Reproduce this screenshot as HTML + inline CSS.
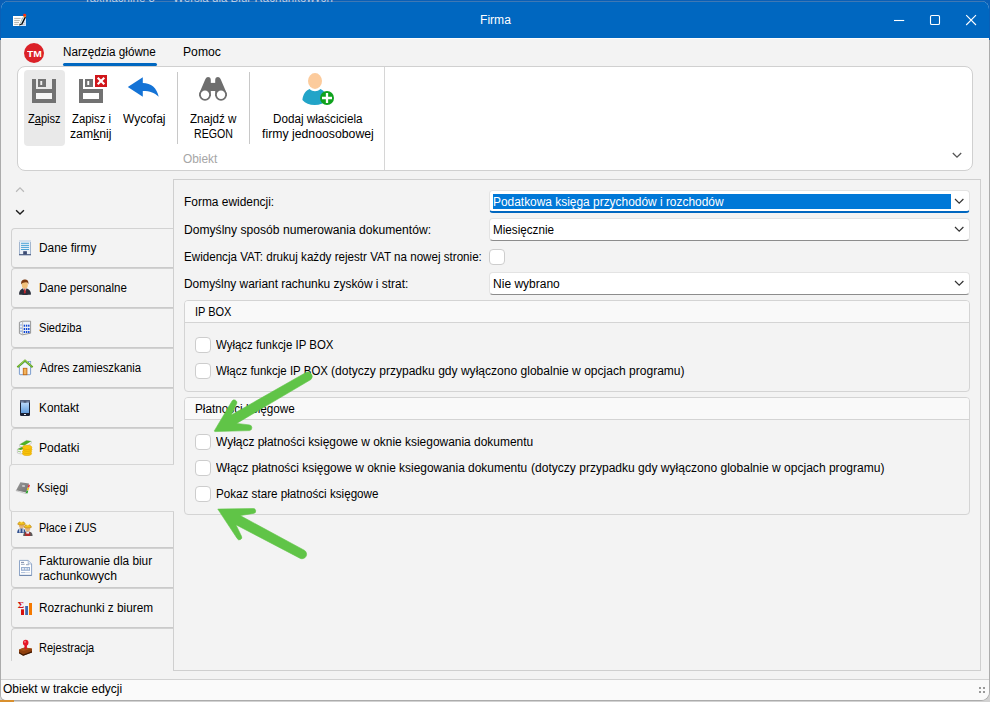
<!DOCTYPE html>
<html lang="pl">
<head>
<meta charset="utf-8">
<title>Firma</title>
<style>
*{box-sizing:border-box;margin:0;padding:0}
html,body{width:990px;height:702px;overflow:hidden}
body{position:relative;background:#f3f3f3;font-family:"Liberation Sans",sans-serif;font-size:12px;line-height:16px;color:#000}
.a{position:absolute}
.t{position:absolute;white-space:nowrap;line-height:16px;transform-origin:0 0}
.t u{text-decoration:underline;text-underline-offset:1px}
svg{position:absolute;overflow:visible}
.tab{position:absolute;left:11px;width:162px;height:40px;border:1px solid #d2d2d2;border-right:none;border-bottom-color:#cacaca;border-radius:4px 0 0 4px;background:#f3f3f3}
.cb{position:absolute;width:16px;height:16px;border:1px solid #cdcdcd;border-radius:4px;background:#fff}
.combo{position:absolute;left:489px;width:481px;height:23px;border:1px solid #e3e3e3;border-bottom:1px solid #8c8c8c;border-radius:4px;background:#fff}
.grp{position:absolute;left:184px;width:786px;border:1px solid #d4d4d4;border-radius:4px;background:#f3f3f3}
.grp .hd{position:absolute;left:0;top:0;right:0;height:22px;background:#f9f9f9;border-bottom:1px solid #d4d4d4;border-radius:3px 3px 0 0}

</style>
</head>
<body>
<!-- desktop fringe behind window -->
<div class="a" style="left:0;top:0;width:990px;height:40px;background:#0a5fb6"></div>
<div class="a" style="left:0;top:40px;width:990px;height:662px;background:#d2d2d2"></div>
<div class="a" style="left:0;top:40px;width:990px;height:661px;background:#acacac;border-radius:0 0 9px 6px"></div>
<div class="a" style="left:0;top:700px;width:14px;height:2px;background:#d9902e"></div>
<!-- window -->
<div class="a" style="left:1px;top:1px;width:988px;height:699px;background:#f3f3f3;border-radius:8px 8px 8px 5px;overflow:hidden">
  <div class="a" style="left:0;top:0;width:988px;height:37px;background:#0067c0;border-top:1px solid #3f78b4"></div>
  <div class="a" style="left:0;top:37px;width:988px;height:1px;background:#fdfdfd"></div>
  <div class="a" style="left:0;top:678px;width:988px;height:1px;background:#d2d2d2"></div>
  <div class="a" style="left:0;top:679px;width:988px;height:20px;background:#fafafa"></div>
</div>
<!-- title bar icon -->
<svg style="left:0;top:0" width="40" height="40" viewBox="0 0 40 40">
  <rect x="13" y="16" width="13" height="10" fill="#fff"/>
  <rect x="21" y="18" width="5" height="8" fill="#d3e6ff"/>
  <path d="M14.2 18.4h6.4M14.2 20.4h5.6M14.2 22.4h4.8M14.2 24.4h4.2" stroke="#a9a9a2" stroke-width="0.9"/>
  <path d="M22.6 22.4h2.6M22 24.4h3.2" stroke="#c8c0b4" stroke-width="0.7"/>
  <path d="M19.5 25.3 L23.9 16.4" stroke="#a08a58" stroke-width="1.1"/>
  <path d="M20.5 24.4 L24.7 16.3" stroke="#d4f0ff" stroke-width="1.5"/>
  <path d="M21.5 24.6 L25.7 16.4" stroke="#050505" stroke-width="1.3"/>
  <path d="M19.3 25.8 L20 23.8 L21.8 24.6 Z" fill="#111"/>
  <path d="M23.2 16.6 L24.4 14.4 L26.4 15.4 L25.6 17.4 Z" fill="#f07a1c"/>
  <ellipse cx="24.6" cy="14.9" rx="1.5" ry="1.1" fill="#ff2a0c"/>
</svg>
<!-- window buttons -->
<svg style="left:890px;top:10px" width="92" height="20" viewBox="890 10 92 20" fill="none" stroke="#fff" stroke-width="1.1">
  <path d="M894 20.5h10.2"/>
  <rect x="930.5" y="15.5" width="9" height="9" rx="1.3"/>
  <path d="M966.2 15.2l9.8 9.8M976 15.2l-9.8 9.8"/>
</svg>
<!-- TM logo -->
<div class="a" style="left:24px;top:43px;width:20px;height:20px;border-radius:50%;background:#db2128"></div>
<!-- active tab underline -->
<div class="a" style="left:63px;top:63px;width:94px;height:3px;border-radius:1.5px;background:#0067c0"></div>
<!-- ribbon panel -->
<div class="a" style="left:17px;top:66px;width:956px;height:105px;background:#fff;border:1px solid #d0d0d0;border-radius:8px"></div>
<div class="a" style="left:384px;top:67px;width:1px;height:103px;background:#d6d6d6"></div>
<div class="a" style="left:24px;top:70px;width:41px;height:76px;border-radius:4px;background:#e9e9e9"></div>
<div class="a" style="left:177px;top:72px;width:1px;height:72px;background:#c8c8c8"></div>
<div class="a" style="left:249px;top:72px;width:1px;height:72px;background:#c8c8c8"></div>
<!-- ribbon icons -->
<svg style="left:0;top:0" width="990" height="702" viewBox="0 0 990 702">
  <!-- save -->
  <rect x="36" y="93" width="16" height="6" fill="#f6f6f6"/><rect x="40" y="81" width="2.4" height="4" fill="#f0f0f0"/>
  <g fill="#727272">
    <path d="M32 79h4v10h16v-10h4v24h-24z M36 93v6h16v-6z" fill-rule="evenodd"/>
    <path d="M38 79h8v8h-8z M40.3 81v4h1.9v-4z" fill-rule="evenodd"/>
  </g>
  <!-- save and close -->
  <g fill="#727272">
    <path d="M79 79h4v10h20v14h-24z M83 93v6h16v-6z" fill-rule="evenodd"/>
    <path d="M85 79h8v8h-8z M87.3 81v4h1.9v-4z" fill-rule="evenodd"/>
  </g>
  <rect x="95" y="75" width="12" height="12" fill="#d0161b"/>
  <path d="M97.7 77.7l6.6 6.6M104.3 77.7l-6.6 6.6" stroke="#fff" stroke-width="2.1"/>
  <!-- undo -->
  <path d="M127.8 87 L142.8 77.2 L142.8 83 C151 83 157 88 158.7 96.8 C155 92.6 150 91 142.8 90.9 L142.8 96.8 Z" fill="#1473d6"/>
  <!-- binoculars -->
  <g fill="#6e6e6e">
    <path d="M205.2 79.6 Q205.9 76.9 207.9 76.9 Q210.8 76.9 210.8 80 V96 H199.2 V93.4 Z"/>
    <path d="M220.8 79.6 Q220.1 76.9 218.1 76.9 Q215.2 76.9 215.2 80 V96 H226.8 V93.4 Z"/>
    <rect x="209" y="82.9" width="8" height="8.1"/>
    <circle cx="205" cy="94.8" r="5.9"/>
    <circle cx="221" cy="94.8" r="5.9"/>
  </g>
  <circle cx="205" cy="94.8" r="4.2" fill="#fff"/>
  <circle cx="221" cy="94.8" r="4.2" fill="#fff"/>
  <!-- person add -->
  <path d="M302.4 100 C303 94 306 90.5 309.5 89 C313 92 317 92 320.5 89 C324 90.5 326.5 94 327 100 C324 103.5 320 105 314.7 105 C309.4 105 305.4 103.5 302.4 100 Z" fill="#22a4c8"/>
  <ellipse cx="315" cy="81" rx="7" ry="7.9" fill="#fccb9c"/>
  <circle cx="327" cy="98" r="7" fill="#0fa21d"/>
  <path d="M322 98h10M327 93v10" stroke="#fff" stroke-width="2.3"/>
  <!-- ribbon collapse chevron -->
  <path d="M952.8 153l4.2 4.2 4.2-4.2" fill="none" stroke="#555" stroke-width="1.3"/>
  <!-- nav chevrons -->
  <path d="M16.1 191.7L20 187.9L23.9 191.7" fill="none" stroke="#b9b9b9" stroke-width="1.2"/>
  <path d="M16.1 210.2L20 214L23.9 210.2" fill="none" stroke="#1c1c1c" stroke-width="1.4"/>
</svg>
<!-- content panel -->
<div class="a" style="left:173px;top:179px;width:808px;height:492px;border:1px solid #cfcfcf;background:#f3f3f3"></div>
<!-- nav tabs -->
<div class="tab" style="top:228px"></div>
<div class="tab" style="top:268px"></div>
<div class="tab" style="top:308px"></div>
<div class="tab" style="top:348px"></div>
<div class="tab" style="top:388px"></div>
<div class="tab" style="top:428px"></div>
<div class="tab" style="top:508px"></div>
<div class="tab" style="top:548px"></div>
<div class="tab" style="top:588px"></div>
<div class="tab" style="top:628px;height:33px;border-bottom:none;border-radius:4px 0 0 0"></div>
<div class="a" style="left:9px;top:464px;width:165px;height:48px;border:1px solid #d6d6d6;border-right:none;border-radius:4px 0 0 4px;background:#f3f3f3"></div>
<!-- form controls -->
<div class="combo" style="top:190px;border-bottom:2px solid #0067c0"></div>
<div class="a" style="left:493px;top:194px;width:458px;height:15px;background:#0078d7"></div>
<div class="combo" style="top:218px"></div>
<div class="cb" style="left:489px;top:249px"></div>
<div class="combo" style="top:272px"></div>
<svg style="left:0;top:0" width="990" height="702" viewBox="0 0 990 702" fill="none" stroke="#333" stroke-width="1.2">
  <path d="M955 199l4.2 4.2 4.2-4.2"/>
  <path d="M955 227l4.2 4.2 4.2-4.2"/>
  <path d="M955 281l4.2 4.2 4.2-4.2"/>
</svg>
<div class="grp" style="top:300px;height:92px"><div class="hd"></div></div>
<div class="cb" style="left:195px;top:337px"></div>
<div class="cb" style="left:195px;top:363px"></div>
<div class="grp" style="top:397px;height:118px"><div class="hd"></div></div>
<div class="cb" style="left:195px;top:434px"></div>
<div class="cb" style="left:195px;top:460px"></div>
<div class="cb" style="left:195px;top:486px"></div>
<!-- status grip -->
<svg style="left:978px;top:686px" width="8" height="8" viewBox="0 0 8 8" fill="#9a9a9a">
  <rect x="1" y="1" width="2" height="2"/><rect x="5" y="1" width="2" height="2"/>
  <rect x="1" y="5" width="2" height="2"/><rect x="5" y="5" width="2" height="2"/>
</svg>

<svg style="left:0;top:0" width="990" height="702" viewBox="0 0 990 702">
  <defs>
    <linearGradient id="gscr" x1="0" y1="0" x2="0" y2="1"><stop offset="0" stop-color="#b8d7fa"/><stop offset="1" stop-color="#639ddc"/></linearGradient>
    <linearGradient id="gbook" x1="0" y1="0" x2="1" y2="1"><stop offset="0" stop-color="#9a9a9a"/><stop offset="1" stop-color="#6f6f6f"/></linearGradient>
  </defs>
  <!-- Dane firmy: building -->
  <g>
    <rect x="19.5" y="240.5" width="11" height="14.3" fill="#eaf0f7" stroke="#a3b6cf" stroke-width="1"/>
    <rect x="19" y="240" width="12" height="2" fill="#d6e0ec"/>
    <path d="M21 243.3h8M21 245.4h8M21 247.4h8M21 249.5h8" stroke="#4aa3d6" stroke-width="1"/>
    <rect x="23.2" y="251.2" width="3.7" height="3.5" fill="#3b4a72"/>
    <rect x="19" y="254.2" width="12" height="1" fill="#47577e"/>
  </g>
  <!-- Dane personalne: person -->
  <g>
    <path d="M19 294.6 C19 291 20.5 289.3 23 288.2 L26.6 288.2 C29.3 289.3 31 291 31 294.6 C29 295.2 21 295.2 19 294.6Z" fill="#2b2f3b"/>
    <path d="M23 288.3L24.8 292 26.7 288.3Z" fill="#fff"/>
    <path d="M24.3 288.6h1.1l.5 4.2-1 1-1.1-1z" fill="#c0262c"/>
    <ellipse cx="24.8" cy="284.9" rx="3" ry="3.6" fill="#f1c07a"/>
    <path d="M21.2 284.5 C20.8 280.3 23 279.6 24.8 279.6 C27 279.6 28.9 280.6 28.4 284.6 C28 282.8 27 282 25.8 282.3 C24 282.6 22.4 282.6 21.2 284.5Z" fill="#7a3a12"/>
  </g>
  <!-- Siedziba: office -->
  <g>
    <path d="M19.4 322.3 L22.6 321.2 H30.6 V333.2 L22.6 334.8 L19.4 333.4Z" fill="#eef2f8" stroke="#8c8c8c" stroke-width="0.9"/>
    <path d="M22.6 321.2V334.8" stroke="#a8a8a8" stroke-width="0.7"/>
    <g fill="#0f45d2"><rect x="23.7" y="324.7" width="1.4" height="2"/><rect x="25.9" y="324.7" width="1.4" height="2"/><rect x="28.1" y="324.7" width="1.4" height="2"/>
    <rect x="23.7" y="328" width="1.4" height="2"/><rect x="25.9" y="328" width="1.4" height="2"/><rect x="28.1" y="328" width="1.4" height="2"/>
    <rect x="23.7" y="331" width="1.4" height="2"/><rect x="25.9" y="331" width="1.4" height="2"/><rect x="28.1" y="331" width="1.4" height="2"/></g>
    <path d="M20.2 325h1.7M20.2 328.2h1.7M20.2 331.2h1.7" stroke="#7fa0e0" stroke-width="1.2"/>
  </g>
  <!-- Adres zamieszkania: house -->
  <g>
    <rect x="28.4" y="361.4" width="2.3" height="5" fill="#eaf0fa" stroke="#7c9fd0" stroke-width="0.8"/>
    <path d="M19.4 366.5 L25 361.6 L30.6 366.5 V374 Q30.6 374.7 29.9 374.7 H20.1 Q19.4 374.7 19.4 374Z" fill="#f1f5fc" stroke="#6f94c8" stroke-width="0.9"/>
    <rect x="23.3" y="368.3" width="3.6" height="6.4" fill="#f2b35c" stroke="#c36a12" stroke-width="0.9"/>
    <path d="M17.4 367.3 L25 360.6 L32.6 367.3" fill="none" stroke="#5fa51c" stroke-width="2" stroke-linejoin="miter"/>
    <path d="M18.4 366.2 L25 360.3 L31.6 366.2" fill="none" stroke="#b4e07a" stroke-width="0.6"/>
  </g>
  <!-- Kontakt: phone -->
  <g>
    <rect x="20" y="400" width="10" height="16" rx="1.3" fill="#1a2135"/>
    <rect x="20.3" y="400.3" width="9.4" height="2.6" rx="1" fill="#6c7a99"/>
    <rect x="21" y="402.6" width="8" height="10.4" fill="url(#gscr)"/>
    <path d="M23.6 402h2.8" stroke="#222b40" stroke-width="0.8"/>
    <rect x="24" y="414" width="2" height="1" fill="#e8edf5"/>
  </g>
  <!-- Podatki: books and coins -->
  <g>
    <path d="M19.6 444.6 L26.4 440.4 L31.3 441.3 L31.3 443.4 L24.4 447.6 L19.6 446.4Z" fill="#f6f6f6" stroke="#b5b5b5" stroke-width="0.6"/>
    <path d="M19.6 444.6 L26.4 440.4 L31.3 441.3 L24.4 445.6Z" fill="#4db029"/>
    <path d="M17.4 449.2 L22 446.9 L25.5 447.6 L25.5 452 L21 454 L17.4 453Z" fill="#f6f6f6" stroke="#b5b5b5" stroke-width="0.6"/>
    <path d="M17.4 449.2 L22 446.9 L25.5 447.6 L21 450Z" fill="#4aa826"/>
    <path d="M18 451.2l3 .9" stroke="#5ab030" stroke-width="0.6"/>
    <g fill="#f8c40c" stroke="#e2a500" stroke-width="0.6">
      <ellipse cx="27" cy="453.6" rx="4.6" ry="2"/>
      <ellipse cx="27" cy="451.6" rx="4.6" ry="2"/>
      <ellipse cx="27.4" cy="449.4" rx="4.6" ry="2"/>
      <ellipse cx="27.2" cy="447.4" rx="4.6" ry="2.1"/>
    </g>
  </g>
  <!-- Ksiegi: book -->
  <g>
    <path d="M16 490.7 L26 493.6 L27 492.3 L17 489.6Z" fill="#fafafa" stroke="#9a9a9a" stroke-width="0.5"/>
    <path d="M16.2 490.2 L20.4 482.2 L29 483.5 L26.2 492.6Z" fill="url(#gbook)"/>
    <path d="M22.4 485.2l2.6.4-.3 1.2-2.6-.4z" fill="#e6e6e6"/>
    <path d="M28.6 484.6l1.3.5-.8 2.6-1.3-.4z" fill="#e8222a"/>
    <path d="M27.7 487.6l1.4.4-.8 2.5-1.4-.4z" fill="#f5c400"/>
    <path d="M26.8 490.4l1.5.4-.9 2.6-1.6-.5z" fill="#22a422"/>
  </g>
  <!-- Place i ZUS: workers -->
  <g>
    <path d="M17.2 533 C17.2 530 18.5 528.4 21.5 528.2 C24.5 528.4 25.6 530 25.6 533Z" fill="#30508f"/>
    <path d="M19.3 529h1.2v3.6h-1.2zM22.5 529h1.2v3.6h-1.2z" fill="#e8eef8"/>
    <ellipse cx="21.5" cy="525.6" rx="2.6" ry="2.8" fill="#e6b678"/>
    <path d="M17.8 524.3 C18 520.6 25 520.6 25.2 524.3 C23 525.2 20 525.2 17.8 524.3Z" fill="#f2c21a" stroke="#b47a14" stroke-width="0.6"/>
    <ellipse cx="21.5" cy="521.6" rx="1.6" ry="0.8" fill="#fff3c4"/>
    <path d="M23.2 536 C23.2 533 24.5 531.4 27.7 531.2 C31 531.4 32.6 533 32.6 536Z" fill="#5a5a5a"/>
    <path d="M25.2 536 V532.4 h5 V536Z" fill="#b12a2a"/>
    <path d="M26.3 531.6h2.8v2h-2.8z" fill="#e8eef8"/>
    <ellipse cx="27.7" cy="528.6" rx="2.6" ry="2.8" fill="#e6b678"/>
    <path d="M24 527.3 C24.2 523.6 31.2 523.6 31.4 527.3 C29.2 528.2 26.2 528.2 24 527.3Z" fill="#f2c21a" stroke="#b47a14" stroke-width="0.6"/>
    <ellipse cx="27.7" cy="524.6" rx="1.6" ry="0.8" fill="#fff3c4"/>
  </g>
  <!-- Fakturowanie: document -->
  <g>
    <path d="M19.5 560.4 H28.2 L31.6 564 V575.4 H19.5Z" fill="#fff" stroke="#8fa6c8" stroke-width="1"/>
    <path d="M28.2 560.4 V564 H31.6" fill="#e3ebf5" stroke="#8fa6c8" stroke-width="0.7"/>
    <path d="M19.5 575.4 H31.6" stroke="#6e86ad" stroke-width="1"/>
    <rect x="21" y="567" width="9" height="3.8" fill="#98afd0"/>
    <path d="M22 568.2h2v1.4h-2zM24.8 568.2h2v1.4h-2zM27.6 568.2h1.4v1.4h-1.4z" fill="#fff"/>
    <path d="M21 562.4h3" stroke="#6f7f9f" stroke-width="0.9"/>
    <path d="M21 564.4h3.6M26 564.6h3" stroke="#a9b4c6" stroke-width="1.2"/>
    <path d="M21 572.6h4" stroke="#a9bcd8" stroke-width="1"/><path d="M25 572.6h5" stroke="#d8dde5" stroke-width="1"/>
  </g>
  <!-- Rozrachunki: sigma + bars -->
  <g>
    <text x="17.7" y="608" font-family="'Liberation Serif', serif" font-weight="700" font-size="9.2" fill="#cf1216" textLength="6.4" lengthAdjust="spacingAndGlyphs">Σ</text>
    <rect x="21" y="609.3" width="3" height="5.7" fill="#d6130f"/>
    <rect x="25.2" y="606" width="2.8" height="9" fill="#3f69b0"/>
    <rect x="29" y="603" width="3" height="12" fill="#f57900"/>
  </g>
  <!-- Rejestracja: stamp -->
  <g>
    <path d="M19 649.6 L24.6 647.4 L32 648.6 V652.4 L23.2 655.8 L19 653.2Z" fill="#8f3e0c"/>
    <path d="M19 652 L23.2 654.4 L32 651.2 V652.4 L23.2 655.8 L19 653.2Z" fill="#3a1804"/>
    <path d="M19 649.6 L24.6 647.4 L32 648.6 L23.4 651Z" fill="#a85218"/>
    <path d="M24.4 644.5h2.6l-.2 4.6c-.7.5-1.6.5-2.2 0z" fill="#e11322"/>
    <ellipse cx="25.7" cy="642.8" rx="2.8" ry="3" fill="#e61828"/>
    <ellipse cx="25" cy="641.8" rx="0.9" ry="1.1" fill="#f47a85"/>
  </g>
</svg>

<div class="a" style="left:0;top:0;width:990px;height:2px;overflow:hidden">
<div class="t" style="left:83.50px;top:-9.80px;font-size:12px;color:#b7cde8;font-weight:400;transform:scaleX(0.9575);">TaxMachine 5</div>
<div class="t" style="left:157.50px;top:-9.80px;font-size:12px;color:#b7cde8;font-weight:400;transform:scaleX(0.9167);">—</div>
<div class="t" style="left:173.00px;top:-9.80px;font-size:12px;color:#b7cde8;font-weight:400;transform:scaleX(0.9636);">Wersja dla Biur Rachunkowych</div>
</div>
<!-- text -->
<div class="t" style="left:479.69px;top:12.00px;font-size:12px;color:#fff;font-weight:400;transform:scaleX(1.0067);">Firma</div>
<div class="t" style="left:26.80px;top:45.60px;font-size:9.3px;color:#fff;font-weight:700;transform:scaleX(1.1077);">TM</div>
<div class="t" style="left:63.03px;top:44.00px;font-size:12px;color:#000;font-weight:400;transform:scaleX(0.9734);">Narzędzia główne</div>
<div class="t" style="left:182.99px;top:44.00px;font-size:12px;color:#000;font-weight:400;transform:scaleX(1.0139);">Pomoc</div>
<div class="t" style="left:28.10px;top:111.00px;font-size:12px;color:#000;font-weight:400;transform:scaleX(0.9200);">Z<u>a</u>pisz</div>
<div class="t" style="left:72.10px;top:111.00px;font-size:12px;color:#000;font-weight:400;transform:scaleX(0.9415);">Zapisz i</div>
<div class="t" style="left:70.38px;top:125.50px;font-size:12px;color:#000;font-weight:400;transform:scaleX(1.0205);">zam<u>k</u>nij</div>
<div class="t" style="left:122.60px;top:111.00px;font-size:12px;color:#000;font-weight:400;transform:scaleX(0.9976);">Wycofaj</div>
<div class="t" style="left:190.10px;top:111.00px;font-size:12px;color:#000;font-weight:400;transform:scaleX(0.9667);">Znajdź w</div>
<div class="t" style="left:194.32px;top:125.50px;font-size:12px;color:#000;font-weight:400;transform:scaleX(0.8833);">REGON</div>
<div class="t" style="left:273.03px;top:111.00px;font-size:12px;color:#000;font-weight:400;transform:scaleX(0.9725);">Dodaj właściciela</div>
<div class="t" style="left:262.30px;top:125.50px;font-size:12px;color:#000;font-weight:400;transform:scaleX(1.0220);">firmy jednoosobowej</div>
<div class="t" style="left:182.81px;top:150.50px;font-size:12px;color:#a6a6a6;font-weight:400;transform:scaleX(0.9912);">Obiekt</div>
<div class="t" style="left:39.11px;top:240.00px;font-size:12px;color:#000;font-weight:400;transform:scaleX(0.9895);">Dane firmy</div>
<div class="t" style="left:39.14px;top:280.00px;font-size:12px;color:#000;font-weight:400;transform:scaleX(0.9622);">Dane personalne</div>
<div class="t" style="left:38.58px;top:320.00px;font-size:12px;color:#000;font-weight:400;transform:scaleX(0.9244);">Siedziba</div>
<div class="t" style="left:39.50px;top:360.00px;font-size:12px;color:#000;font-weight:400;transform:scaleX(0.9402);">Adres zamieszkania</div>
<div class="t" style="left:39.12px;top:400.00px;font-size:12px;color:#000;font-weight:400;transform:scaleX(0.9850);">Kontakt</div>
<div class="t" style="left:39.09px;top:440.00px;font-size:12px;color:#000;font-weight:400;transform:scaleX(1.0105);">Podatki</div>
<div class="t" style="left:37.15px;top:480.00px;font-size:12px;color:#000;font-weight:400;transform:scaleX(0.9484);">Księgi</div>
<div class="t" style="left:39.19px;top:520.00px;font-size:12px;color:#000;font-weight:400;transform:scaleX(0.9097);">Płace i ZUS</div>
<div class="t" style="left:39.11px;top:553.00px;font-size:12px;color:#000;font-weight:400;transform:scaleX(0.9860);">Fakturowanie dla biur</div>
<div class="t" style="left:39.08px;top:568.00px;font-size:12px;color:#000;font-weight:400;transform:scaleX(1.0160);">rachunkowych</div>
<div class="t" style="left:39.12px;top:600.00px;font-size:12px;color:#000;font-weight:400;transform:scaleX(0.9833);">Rozrachunki z biurem</div>
<div class="t" style="left:39.18px;top:640.00px;font-size:12px;color:#000;font-weight:400;transform:scaleX(0.9203);">Rejestracja</div>
<div class="t" style="left:184.01px;top:194.00px;font-size:12px;color:#000;font-weight:400;transform:scaleX(0.9944);">Forma ewidencji:</div>
<div class="t" style="left:183.99px;top:222.00px;font-size:12px;color:#000;font-weight:400;transform:scaleX(1.0091);">Domyślny sposób numerowania dokumentów:</div>
<div class="t" style="left:184.03px;top:249.00px;font-size:12px;color:#000;font-weight:400;transform:scaleX(0.9680);">Ewidencja VAT: drukuj każdy rejestr VAT na nowej stronie:</div>
<div class="t" style="left:184.01px;top:276.00px;font-size:12px;color:#000;font-weight:400;transform:scaleX(0.9920);">Domyślny wariant rachunku zysków i strat:</div>
<div class="t" style="left:493.11px;top:194.00px;font-size:12px;color:#fff;font-weight:400;transform:scaleX(0.9931);">Podatkowa księga przychodów i rozchodów</div>
<div class="t" style="left:493.13px;top:222.00px;font-size:12px;color:#000;font-weight:400;transform:scaleX(0.9738);">Miesięcznie</div>
<div class="t" style="left:493.10px;top:276.00px;font-size:12px;color:#000;font-weight:400;transform:scaleX(1.0000);">Nie wybrano</div>
<div class="t" style="left:194.78px;top:304.00px;font-size:12px;color:#000;font-weight:400;transform:scaleX(0.9158);">IP BOX</div>
<div class="t" style="left:216.10px;top:336.50px;font-size:12px;color:#000;font-weight:400;transform:scaleX(0.9545);">Wyłącz funkcje IP BOX</div>
<div class="t" style="left:216.10px;top:363.00px;font-size:12px;color:#000;font-weight:400;transform:scaleX(0.9556);">Włącz funkcje IP BOX</div>
<div class="t" style="left:331.30px;top:363.00px;font-size:12px;color:#000;font-weight:400;transform:scaleX(1.0040);">(dotyczy przypadku gdy wyłączono globalnie w opcjach programu)</div>
<div class="t" style="left:194.72px;top:401.00px;font-size:12px;color:#000;font-weight:400;transform:scaleX(0.9782);">Płatności księgowe</div>
<div class="t" style="left:216.10px;top:434.00px;font-size:12px;color:#000;font-weight:400;transform:scaleX(0.9950);">Wyłącz płatności księgowe w oknie ksiegowania dokumentu</div>
<div class="t" style="left:216.10px;top:460.00px;font-size:12px;color:#000;font-weight:400;transform:scaleX(0.9946);">Włącz płatności księgowe w oknie ksiegowania dokumentu</div>
<div class="t" style="left:530.50px;top:460.00px;font-size:12px;color:#000;font-weight:400;transform:scaleX(1.0037);">(dotyczy przypadku gdy wyłączono globalnie w opcjach programu)</div>
<div class="t" style="left:215.73px;top:486.00px;font-size:12px;color:#000;font-weight:400;transform:scaleX(0.9705);">Pokaz stare płatności księgowe</div>
<div class="t" style="left:2.70px;top:680.50px;font-size:12px;color:#000;font-weight:400;transform:scaleX(0.9983);">Obiekt w trakcie edycji</div>
<!-- overlays -->
<svg style="left:0;top:0" width="990" height="702" viewBox="0 0 990 702">
  <g fill="#60c447" stroke="#60c447" stroke-width="0.6" stroke-linejoin="round">
    <path d="M214.3 430.9 L232.1 400.9 A2.7 2.7 0 0 1 236.8 403.3 L231.3 415 L306.5 372.2 A4.4 4.4 0 0 1 310.9 379.5 L236.6 423.4 L249.4 424.9 A2.9 2.9 0 0 1 249.6 430.6 L214.8 431.6 Z"/>
    <path d="M217.8 509.1 L253.1 508.6 A2.4 2.4 0 0 1 253.5 513.4 L240.2 515.6 L304.2 550.2 A4.5 4.5 0 0 1 299.9 558.2 L235.9 524.7 L241.5 536.3 A2.4 2.4 0 0 1 237.2 538.5 Z"/>
  </g>
</svg>

</body>
</html>
